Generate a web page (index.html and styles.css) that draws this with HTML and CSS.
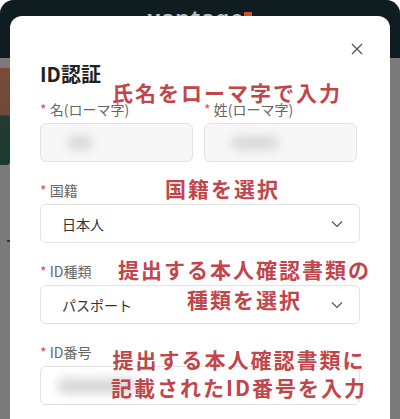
FILE: index.html
```html
<!DOCTYPE html>
<html lang="ja">
<head>
  <meta charset="UTF-8" />
  <meta name="viewport" content="width=device-width, initial-scale=1.0"/>
  <title>ID認証</title>
  <link rel="stylesheet" href="styles.css">
</head>
<body>
  <div class="screen">
    <header class="topbar">
      <div class="logo">vantage<span class="logo-mark"></span></div>
    </header>
    <div class="page">
      <div class="side-card"></div>
      <div class="side-line"></div>
    </div>
  </div>

  <div class="modal">
    <button class="close-btn" aria-label="閉じる">
      <svg width="12" height="12" viewBox="0 0 12 12"><path d="M1 1L11 11M11 1L1 11" stroke="#555" stroke-width="1.3" fill="none"/></svg>
    </button>
    <h1>ID認証</h1>

    <div class="row">
      <div class="field">
        <label><span class="req">*</span> 名(ローマ字)</label>
        <div class="input filled"><span class="blur short"></span></div>
      </div>
      <div class="field">
        <label><span class="req">*</span> 姓(ローマ字)</label>
        <div class="input filled"><span class="blur wide"></span></div>
      </div>
    </div>

    <div class="field">
      <label><span class="req">*</span> 国籍</label>
      <div class="select">
        <span>日本人</span>
        <svg class="chevron" width="12" height="8" viewBox="0 0 12 8"><path d="M1 1.5L6 6.5L11 1.5" stroke="#555" stroke-width="1.2" fill="none"/></svg>
      </div>
    </div>

    <div class="field">
      <label><span class="req">*</span> ID種類</label>
      <div class="select">
        <span>パスポート</span>
        <svg class="chevron" width="12" height="8" viewBox="0 0 12 8"><path d="M1 1.5L6 6.5L11 1.5" stroke="#555" stroke-width="1.2" fill="none"/></svg>
      </div>
    </div>

    <div class="field">
      <label><span class="req">*</span> ID番号</label>
      <div class="input"><span class="blur long"></span></div>
    </div>
  </div>

  <div class="notes">
    <div class="note note-name">氏名をローマ字で入力</div>
    <div class="note note-country">国籍を選択</div>
    <div class="note note-type">提出する本人確認書類の<br>種類を選択</div>
    <div class="note note-number">提出する本人確認書類に<br>記載されたID番号を入力</div>
  </div>
</body>
</html>
```

FILE: styles.css
```css
:root {
  --overlay: #7a7a7a;
  --dark: #0f1d21;
  --note-color: #c1464b;
  --label-color: #666;
  --border: #e3e3e3;
  --required: #e5484d;
}

body {
  margin: 0;
  width: 400px;
  height: 419px;
  overflow: hidden;
  background: #fff;
  font-family: 'Noto Sans CJK JP', 'Noto Sans', sans-serif;
  position: relative;
}

.screen {
  height: 419px;
  border-radius: 14px 14px 0 0;
  overflow: hidden;
  background: var(--overlay);
}

.topbar {
  height: 58px;
  background: var(--dark);
  display: flex;
  justify-content: center;
}

.logo {
  margin-top: 2px;
  font-family: 'Noto Sans', sans-serif;
  font-size: 22px;
  font-weight: bold;
  color: #b9bfc1;
  letter-spacing: 1px;
  display: flex;
  align-items: flex-start;
}

.logo-mark {
  width: 8px;
  height: 8px;
  margin-top: 10px;
  background: #c8552a;
}

.page {
  position: relative;
}

.side-card {
  margin-top: 10px;
  width: 10px;
  height: 97px;
  background: linear-gradient(#7b4a3b 0%, #6e4a3a 48%, #213c32 50%, #1c3a30 100%);
  border-radius: 0 0 4px 0;
}

.side-line {
  margin-top: 75px;
  margin-left: 7px;
  width: 4px;
  height: 2px;
  background: #333;
}

.modal {
  position: absolute;
  left: 10px;
  top: 16px;
  width: 380px;
  height: 430px;
  box-sizing: border-box;
  padding: 44px 30px 0;
  background: #fff;
  border-radius: 12px 12px 0 0;
}

.close-btn {
  position: absolute;
  top: 27px;
  right: 27px;
  width: 12px;
  height: 12px;
  padding: 0;
  border: none;
  background: none;
  display: flex;
}

h1 {
  margin: 0 0 11px;
  font-size: 20px;
  line-height: 28px;
  font-weight: bold;
  color: #222;
}

.row {
  display: flex;
  gap: 11px;
  width: 317px;
}

.row .field {
  flex: 1;
}

.field {
  margin-bottom: 18px;
}

label {
  display: block;
  font-size: 14px;
  line-height: 20px;
  color: var(--label-color);
  margin-bottom: 4px;
}

.req {
  color: var(--required);
}

.input,
.select {
  height: 39px;
  box-sizing: border-box;
  border: 1px solid var(--border);
  border-radius: 6px;
  background: #fff;
  display: flex;
  align-items: center;
  overflow: hidden;
}

.input.filled {
  background: #f7f7f7;
}

.select {
  width: 320px;
  padding: 0 16px 0 21px;
  justify-content: space-between;
  font-size: 14px;
  color: #333;
}

.blur {
  display: block;
  height: 14px;
  background: #d9d9d9;
  border-radius: 7px;
  filter: blur(5px);
}

.blur.short {
  width: 26px;
  margin-left: 26px;
}

.blur.wide {
  width: 48px;
  margin-left: 26px;
}

.blur.long {
  width: 80px;
  margin-left: 16px;
  height: 16px;
}

.notes {
  position: absolute;
  inset: 0;
  pointer-events: none;
}

.note {
  position: absolute;
  font-size: 21px;
  line-height: 28px;
  font-weight: bold;
  color: var(--note-color);
  letter-spacing: 2px;
  text-align: center;
  white-space: nowrap;
}

.note-name {
  left: 112px;
  top: 83px;
  line-height: 18px;
}

.note-country {
  left: 165px;
  top: 174px;
}

.note-type {
  left: 118px;
  top: 254px;
  line-height: 30px;
}

.note-number {
  left: 111px;
  top: 345px;
}
```
